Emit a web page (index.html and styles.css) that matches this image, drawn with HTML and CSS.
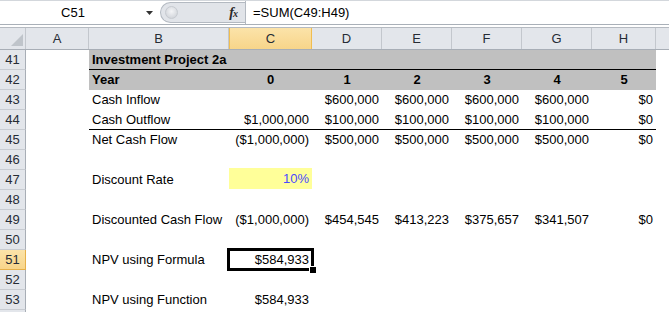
FILE: index.html
```html
<!DOCTYPE html>
<html>
<head>
<meta charset="utf-8">
<link rel="stylesheet" href="styles.css">
</head>
<body>
<div class="app">
  <div class="fbar">
    <div class="namebox">
      <span class="ref">C51</span>
      <svg class="dd" width="8" height="5" viewBox="0 0 8 5"><path d="M0 0H7L3.5 4Z" fill="#333"/></svg>
    </div>
    <div class="fmid">
      <span class="knob"></span>
      <span class="fx"><i>f</i><span class="x">x</span></span>
    </div>
    <div class="finput">=SUM(C49:H49)</div>
  </div>
  <div class="gap"></div>
  <div class="sheet">
    <div class="row hdr">
      <div class="corner"><span class="tri"></span></div>
      <div class="ch">A</div><div class="ch">B</div><div class="ch sel">C</div><div class="ch">D</div><div class="ch">E</div><div class="ch">F</div><div class="ch">G</div><div class="ch">H</div><div class="ch fill"></div>
    </div>
    <div class="row">
      <div class="rh">41</div><div class="c"></div>
      <div class="c b gray bb">Investment Project 2a</div><div class="c gray bb"></div><div class="c gray bb"></div><div class="c gray bb"></div><div class="c gray bb"></div><div class="c gray bb"></div><div class="c gray bb"></div><div class="c"></div>
    </div>
    <div class="row">
      <div class="rh">42</div><div class="c"></div>
      <div class="c b gray">Year</div><div class="c b gray ctr">0</div><div class="c b gray ctr">1</div><div class="c b gray ctr">2</div><div class="c b gray ctr">3</div><div class="c b gray ctr">4</div><div class="c b gray ctr">5</div><div class="c"></div>
    </div>
    <div class="row">
      <div class="rh">43</div><div class="c"></div>
      <div class="c">Cash Inflow</div><div class="c r"></div><div class="c r">$600,000</div><div class="c r">$600,000</div><div class="c r">$600,000</div><div class="c r">$600,000</div><div class="c r">$0</div><div class="c"></div>
    </div>
    <div class="row">
      <div class="rh">44</div><div class="c"></div>
      <div class="c bb">Cash Outflow</div><div class="c r bb">$1,000,000</div><div class="c r bb">$100,000</div><div class="c r bb">$100,000</div><div class="c r bb">$100,000</div><div class="c r bb">$100,000</div><div class="c r bb">$0</div><div class="c"></div>
    </div>
    <div class="row">
      <div class="rh">45</div><div class="c"></div>
      <div class="c">Net Cash Flow</div><div class="c r">($1,000,000)</div><div class="c r">$500,000</div><div class="c r">$500,000</div><div class="c r">$500,000</div><div class="c r">$500,000</div><div class="c r">$0</div><div class="c"></div>
    </div>
    <div class="row">
      <div class="rh">46</div><div class="c"></div>
      <div class="c"></div><div class="c"></div><div class="c"></div><div class="c"></div><div class="c"></div><div class="c"></div><div class="c"></div><div class="c"></div>
    </div>
    <div class="row">
      <div class="rh">47</div><div class="c"></div>
      <div class="c">Discount Rate</div><div class="c r input">10%</div><div class="c"></div><div class="c"></div><div class="c"></div><div class="c"></div><div class="c"></div><div class="c"></div>
    </div>
    <div class="row">
      <div class="rh">48</div><div class="c"></div>
      <div class="c"></div><div class="c"></div><div class="c"></div><div class="c"></div><div class="c"></div><div class="c"></div><div class="c"></div><div class="c"></div>
    </div>
    <div class="row">
      <div class="rh">49</div><div class="c"></div>
      <div class="c">Discounted Cash Flow</div><div class="c r">($1,000,000)</div><div class="c r">$454,545</div><div class="c r">$413,223</div><div class="c r">$375,657</div><div class="c r">$341,507</div><div class="c r">$0</div><div class="c"></div>
    </div>
    <div class="row">
      <div class="rh">50</div><div class="c"></div>
      <div class="c"></div><div class="c"></div><div class="c"></div><div class="c"></div><div class="c"></div><div class="c"></div><div class="c"></div><div class="c"></div>
    </div>
    <div class="row">
      <div class="rh sel">51</div><div class="c"></div>
      <div class="c">NPV using Formula</div><div class="c r active">$584,933</div><div class="c"></div><div class="c"></div><div class="c"></div><div class="c"></div><div class="c"></div><div class="c"></div>
    </div>
    <div class="row">
      <div class="rh">52</div><div class="c"></div>
      <div class="c"></div><div class="c"></div><div class="c"></div><div class="c"></div><div class="c"></div><div class="c"></div><div class="c"></div><div class="c"></div>
    </div>
    <div class="row">
      <div class="rh">53</div><div class="c"></div>
      <div class="c">NPV using Function</div><div class="c r">$584,933</div><div class="c"></div><div class="c"></div><div class="c"></div><div class="c"></div><div class="c"></div><div class="c"></div>
    </div>
    <div class="row">
      <div class="rh"></div><div class="c"></div>
      <div class="c"></div><div class="c"></div><div class="c"></div><div class="c"></div><div class="c"></div><div class="c"></div><div class="c"></div><div class="c"></div>
    </div>
  </div>
</div>
</body>
</html>
```
FILE: styles.css
```css
* { box-sizing: border-box; margin: 0; padding: 0; }
html, body { margin: 0; background: #fff; }
body {
  width: 669px;
  height: 312px;
  overflow: hidden;
  font-family: "Liberation Sans", Arial, sans-serif;
  font-size: 13px;
  color: #000;
}
.app { width: 669px; }

/* formula bar */
.fbar {
  display: flex;
  height: 25px;
  border-top: 1px solid #d3d7dc;
  border-bottom: 1px solid #a9b0b8;
  background: #fff;
}
.namebox {
  width: 160px;
  display: flex;
  align-items: center;
  background: #fff;
}
.namebox .ref { width: 146px; text-align: center; }
.namebox .dd { margin-top: 1px; }
.fmid {
  width: 85px;
  margin: 1px 0 1px 0;
  display: flex;
  align-items: center;
  justify-content: space-between;
  background: #e1e4e9;
  border: 1px solid #b3b9c1;
  border-right: none;
  border-radius: 11px 0 0 11px;
  padding: 0 8px 0 4px;
}
.knob {
  width: 13px;
  height: 13px;
  border-radius: 50%;
  background: radial-gradient(circle at 50% 40%, #f4f5f7 0%, #d6d9de 70%, #c3c7cd 100%);
  border: 1px solid #c6cad0;
}
.fx {
  font-family: "Liberation Serif", "Times New Roman", serif;
  font-size: 14px;
  font-weight: bold;
  color: #2a2a2a;
  letter-spacing: -1px;
}
.fx .x { font-size: 10px; font-style: italic; }
.finput {
  flex: 1;
  display: flex;
  align-items: center;
  padding-left: 7px;
  border-left: 1px solid #b3b9c1;
  background: #fff;
}
.gap { height: 2px; background: #fff; }

/* sheet grid */
.row {
  display: grid;
  grid-template-columns: 26px 63px 140px 83px 70px 70px 70px 70px 64px 1fr;
  height: 20px;
}
.row.hdr {
  height: 23px;
  border-top: 1px solid #b5bac1;
  border-bottom: 1px solid #a8aeb6;
  background: #e3e6eb;
}
.corner {
  position: relative;
  border-right: 1px solid #c3c7cd;
  background: #e3e6eb;
}
.tri {
  position: absolute;
  right: 2px;
  bottom: 3px;
  width: 0;
  height: 0;
  border-left: 12px solid transparent;
  border-bottom: 12px solid #bfc4ca;
}
.ch {
  text-align: center;
  line-height: 21px;
  color: #262c35;
  border-right: 1px solid #c3c7cd;
  background: #e3e6eb;
}
.ch.fill { border-right: none; }
.ch.sel {
  background: linear-gradient(#fbe3a9, #f8d58a);
  border: 1px solid #f0bd50;
  border-top: none;
  border-bottom: none;
  line-height: 21px;
}
.rh {
  text-align: center;
  line-height: 19px;
  color: #262c35;
  background: #e3e6eb;
  border-right: 1px solid #a8aeb6;
  border-bottom: 1px solid #c8ccd2;
}
.rh.sel {
  background: linear-gradient(#fbe3a9, #f8d58a);
  border-right-color: #e6b04a;
  border-bottom-color: #e6b04a;
}
.c {
  padding: 0 3px;
  line-height: 20px;
  white-space: nowrap;
  overflow: visible;
  position: relative;
}
.r { text-align: right; }
.ctr { text-align: center; }
.b { font-weight: bold; }
.gray { background: #c0c0c0; }
.bb { border-bottom: 1px solid #000; line-height: 19px; }
.input {
  background: #ffff99;
  color: #4a4aff;
  margin: -2px 0 1px 0;
  line-height: 21px;
}
.active::before {
  content: "";
  position: absolute;
  top: -2px;
  left: -2px;
  right: -2px;
  bottom: -1px;
  border: 3px solid #000;
}
.active::after {
  content: "";
  position: absolute;
  right: -4px;
  bottom: -3px;
  width: 6px;
  height: 6px;
  background: #000;
  border: 1px solid #fff;
  border-right: none;
  border-bottom: none;
}
```
